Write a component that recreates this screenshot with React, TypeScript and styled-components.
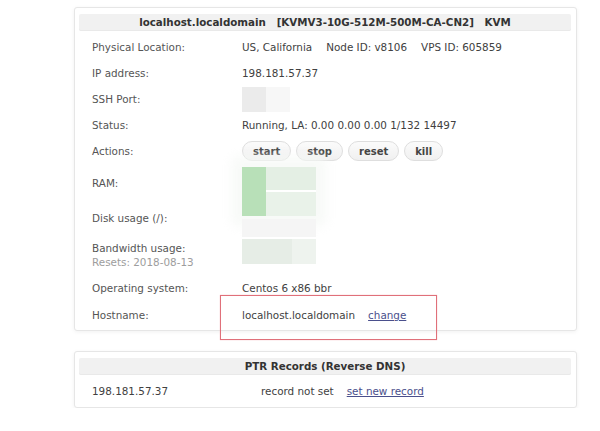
import React, { FC } from "react";
import styled, { createGlobalStyle } from "styled-components";

const GlobalStyle = createGlobalStyle`
  html, body {
    margin: 0;
    padding: 0;
    background: #ffffff;
  }
  body {
    font-family: "DejaVu Sans", Verdana, sans-serif;
    font-size: 10.4px;
    color: #444444;
  }
`;

const Page = styled.div`
  padding: 7px 23px 0 74px;
  width: 503px;
`;

const Panel = styled.div<{ $gap?: number }>`
  margin-top: ${(p) => p.$gap ?? 0}px;
  border: 1px solid #e6e6e6;
  border-radius: 3px;
  box-shadow: 0 1px 4px rgba(0, 0, 0, 0.06);
  padding: 6px 5px 0 4px;
  background: #ffffff;
`;

const PanelHead = styled.div`
  height: 17px;
  line-height: 17px;
  background: #f1f1f1;
  border-radius: 2px;
  box-shadow: inset 0 -1px 0 #e9e9e9;
  text-align: center;
  font-weight: bold;
  font-size: 10.3px;
  color: #333333;
  white-space: pre;
`;

const InfoGrid = styled.div`
  display: grid;
  grid-template-columns: 150px 1fr;
  grid-template-rows: 26px 26px 26px 26px 26px 38px 32px 42px 24px 30px;
  margin-top: 3px;
  padding-left: 13px;
`;

const Label = styled.div`
  display: flex;
  flex-direction: column;
  justify-content: center;
  color: #555555;
  line-height: 14px;
`;

const Value = styled.div<{ $span?: number }>`
  display: flex;
  align-items: center;
  color: #414141;
  position: relative;
  grid-row: ${(p) => (p.$span ? `span ${p.$span}` : "auto")};
`;

const Muted = styled.span`
  color: #9d9d9d;
`;

const Spaced = styled.span`
  margin-left: 14px;
`;

const BlockCell = styled(Value)`
  flex-direction: column;
  align-items: flex-start;
  justify-content: flex-start;
`;

const SshBox = styled.div<{ $top?: number }>`
  display: flex;
  margin-top: ${(p) => p.$top ?? 1}px;
  height: 25px;
`;

const Blur = styled.div<{ $w: number; $c: string; $h?: number }>`
  width: ${(p) => p.$w}px;
  height: ${(p) => p.$h ?? 25}px;
  background: ${(p) => p.$c};
  filter: blur(0.6px);
`;

const Meter = styled.div`
  display: flex;
  margin-top: 3px;
  height: 49px;
  box-shadow: 0 0 10px 10px rgba(246, 249, 246, 0.8);
`;

const MeterSplit = styled.div`
  display: flex;
  flex-direction: column;
  gap: 2px;
`;

const Buttons = styled.div`
  display: flex;
  gap: 5px;
`;

const PillButton = styled.button`
  height: 20px;
  padding: 0 10px;
  border: 1px solid #dedede;
  border-radius: 10px;
  background: linear-gradient(#fbfbfb, #f0f0f0);
  font-family: "DejaVu Sans", Verdana, sans-serif;
  font-size: 10px;
  font-weight: bold;
  color: #444444;
  cursor: pointer;
`;

const LinkText = styled.a`
  margin-left: 13px;
  color: #4a4f8c;
  text-decoration: underline;
  cursor: pointer;
`;

const Highlight = styled.div`
  position: absolute;
  left: -22px;
  top: -5px;
  width: 215px;
  height: 43px;
  border: 1px solid #e0707a;
  box-shadow: 0 0 1px #f2aab0;
  pointer-events: none;
`;

const PtrRow = styled.div`
  display: grid;
  grid-template-columns: 169px 1fr;
  align-items: center;
  height: 32px;
  padding-left: 13px;
  color: #414141;
`;

const actions = ["start", "stop", "reset", "kill"];

export const App: FC = () => {
  return (
    <Page>
      <GlobalStyle />
      <Panel>
        <PanelHead>{"localhost.localdomain   [KVMV3-10G-512M-500M-CA-CN2]   KVM"}</PanelHead>
        <InfoGrid>
          <Label>Physical Location:</Label>
          <Value>
            US, California
            <Spaced>Node ID: v8106</Spaced>
            <Spaced>VPS ID: 605859</Spaced>
          </Value>

          <Label>IP address:</Label>
          <Value>198.181.57.37</Value>

          <Label>SSH Port:</Label>
          <BlockCell>
            <SshBox>
              <Blur $w={24} $c="#ebebeb" />
              <Blur $w={24} $c="#f7f7f7" />
            </SshBox>
          </BlockCell>

          <Label>Status:</Label>
          <Value>Running, LA: 0.00 0.00 0.00 1/132 14497</Value>

          <Label>Actions:</Label>
          <Value>
            <Buttons>
              {actions.map((a) => (
                <PillButton key={a}>{a}</PillButton>
              ))}
            </Buttons>
          </Value>

          <Label>RAM:</Label>
          <BlockCell $span={2}>
            <Meter>
              <Blur $w={24} $c="#b8e0b8" $h={49} />
              <MeterSplit>
                <Blur $w={50} $c="#e4efe4" $h={23} />
                <Blur $w={50} $c="#e9f2e9" $h={24} />
              </MeterSplit>
            </Meter>
            <SshBox $top={3}>
              <Blur $w={74} $c="#f5f5f5" $h={18} />
            </SshBox>
          </BlockCell>
          <Label>Disk usage (/):</Label>

          <Label>
            <span>Bandwidth usage:</span>
            <Muted>Resets: 2018-08-13</Muted>
          </Label>
          <BlockCell>
            <SshBox $top={5}>
              <Blur $w={50} $c="#e6ede6" />
              <Blur $w={24} $c="#eef3ee" />
            </SshBox>
          </BlockCell>

          <Label>Operating system:</Label>
          <Value>Centos 6 x86 bbr</Value>

          <Label>Hostname:</Label>
          <Value>
            localhost.localdomain
            <LinkText>change</LinkText>
            <Highlight />
          </Value>
        </InfoGrid>
      </Panel>

      <Panel $gap={20}>
        <PanelHead>PTR Records (Reverse DNS)</PanelHead>
        <PtrRow>
          <span>198.181.57.37</span>
          <span>
            record not set
            <LinkText>set new record</LinkText>
          </span>
        </PtrRow>
      </Panel>
    </Page>
  );
};

export default App;
